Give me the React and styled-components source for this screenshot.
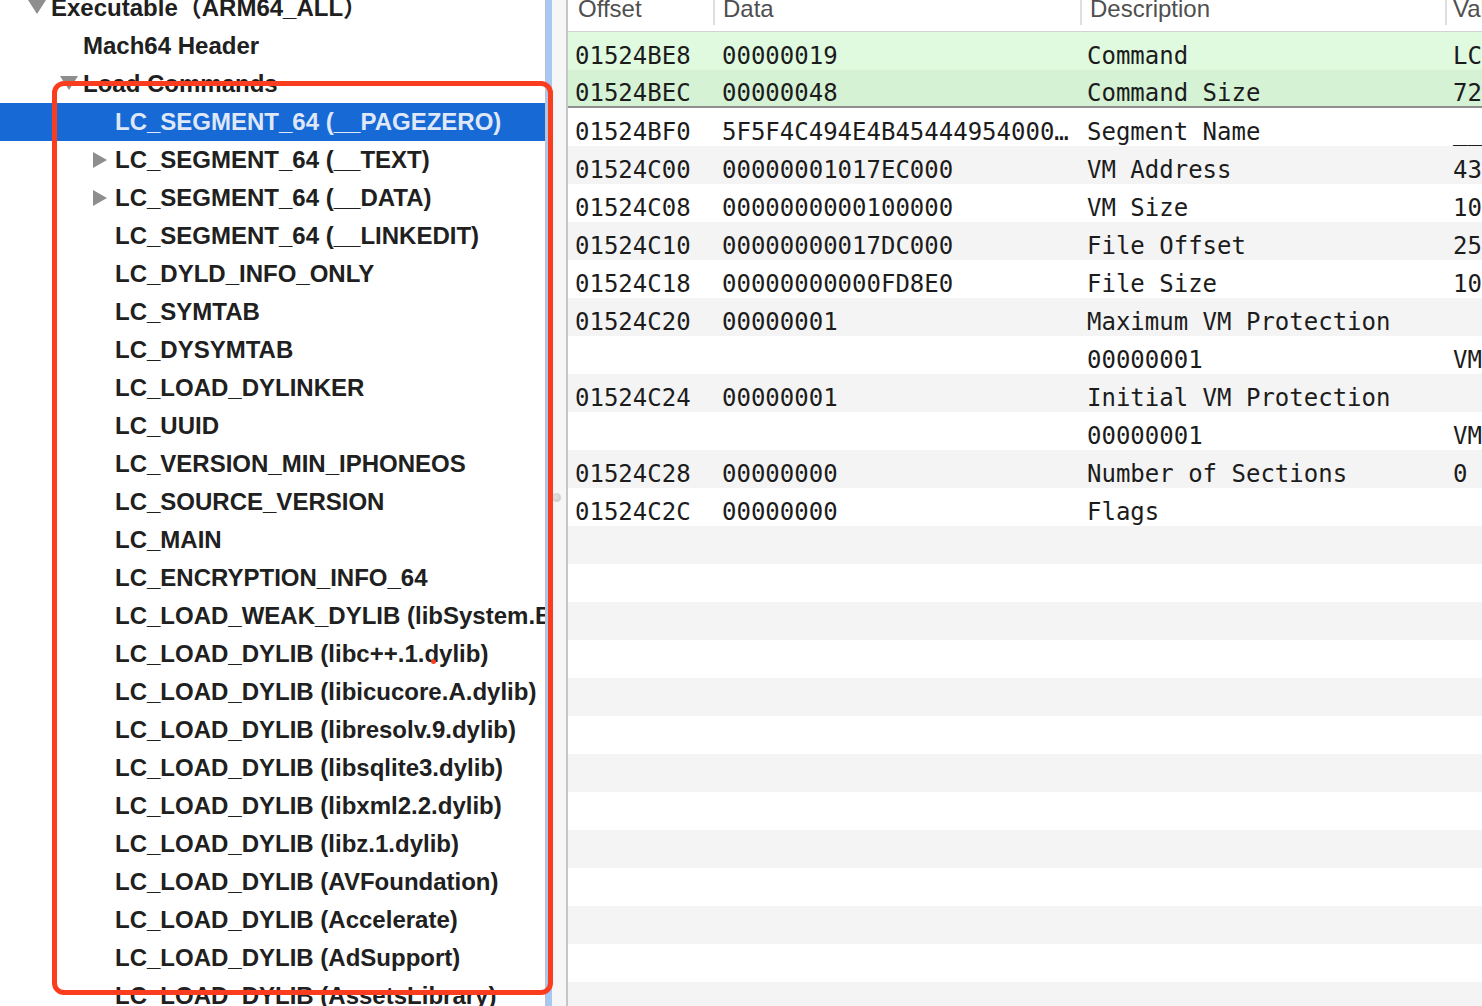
import React from "react";
import styled, { createGlobalStyle } from "styled-components";

const GlobalStyle = createGlobalStyle`
  html, body { margin: 0; padding: 0; background: #ffffff; overflow: hidden; }
  * { box-sizing: border-box; }
`;

const Window = styled.div`
  position: relative;
  display: flex;
  width: 1482px;
  height: 1006px;
  overflow: hidden;
  background: #ffffff;
`;

const Sidebar = styled.div`
  flex: none;
  width: 546px;
  height: 100%;
  overflow: hidden;
  background: #ffffff;
  border-right: 1px solid #c2c2c2;
`;

const ScrollStrip = styled.div`
  flex: none;
  width: 6px;
  height: 100%;
  background: #a8c8f4;
`;

const Splitter = styled.div`
  flex: none;
  width: 16px;
  height: 100%;
  background: #f6f6f6;
  border-right: 2px solid #c6c6c6;
  display: flex;
  align-items: center;
  justify-content: flex-start;
`;

const Dimple = styled.div`
  width: 9px;
  height: 9px;
  margin-top: -12px;
  border-radius: 50%;
  background: radial-gradient(circle at 40% 40%, #e2e2e2, #c4c4c4);
`;

const TreeList = styled.div`
  margin-top: -11px;
  display: flex;
  flex-direction: column;
`;

const TreeRow = styled.div`
  display: flex;
  align-items: center;
  height: 38px;
  padding-left: ${(p) => 27 + 32 * p.$level}px;
  background: ${(p) => (p.$selected ? "#1769d6" : "transparent")};
  color: ${(p) => (p.$selected ? "#dfe8f8" : "#202020")};
  font-family: "Liberation Sans", Arial, "Noto Sans CJK SC", sans-serif;
  font-weight: 700;
  font-size: 24px;
  white-space: nowrap;
`;

const Toggle = styled.span`
  flex: none;
  width: 24px;
  height: 38px;
  display: flex;
  align-items: center;
  justify-content: flex-start;
  color: #8e8e8e;
`;

const Label = styled.span`
  line-height: 38px;
`;

const Pane = styled.div`
  flex: 1;
  min-width: 0;
  height: 100%;
  display: flex;
  flex-direction: column;
  overflow: hidden;
`;

const COLS = "145px 367px 365px 1fr";

const HeaderRow = styled.div`
  flex: none;
  display: grid;
  grid-template-columns: ${COLS};
  height: 32px;
  border-bottom: 1px solid #d2d2d2;
  background: #ffffff;
`;

const HeaderCell = styled.div`
  position: relative;
  padding-left: ${(p) => p.$pad}px;
  font-family: "Liberation Sans", Arial, sans-serif;
  font-size: 24px;
  line-height: 18px;
  color: #4f4f4f;
  white-space: nowrap;
  overflow: hidden;
  &:not(:first-child)::before {
    content: "";
    position: absolute;
    left: 0;
    top: 0;
    width: 2px;
    height: 25px;
    background: #dedede;
  }
`;

const rowBg = {
  green1: "#dffadf",
  green2: "#d5f2d5",
  white: "#ffffff",
  gray: "#f4f4f4",
};

const DataRow = styled.div`
  flex: none;
  display: grid;
  grid-template-columns: ${COLS};
  height: 38px;
  padding-top: 9px;
  align-items: center;
  background: ${(p) => rowBg[p.$tone]};
  border-bottom: ${(p) => (p.$divider ? "2px solid #8f8f8f" : "none")};
  font-family: "DejaVu Sans Mono", "Liberation Mono", monospace;
  font-size: 24px;
  line-height: 28px;
  color: #1c1c1c;
`;

const Cell = styled.div`
  padding-left: ${(p) => p.$pad}px;
  white-space: pre;
  overflow: hidden;
`;

const Annotation = styled.div`
  position: absolute;
  left: 52px;
  top: 81px;
  width: 501px;
  height: 914px;
  border: 5px solid #fb3d1f;
  border-radius: 12px;
  pointer-events: none;
`;

const Dot = styled.div`
  position: absolute;
  left: 431px;
  top: 659px;
  width: 5px;
  height: 5px;
  border-radius: 50%;
  background: #fb3d1f;
`;

const DownTri = () => (
  <svg width="18" height="14" viewBox="0 0 18 14" style={{ marginLeft: 1, marginTop: -2 }}>
    <path d="M0 0 H18 L9 14 Z" fill="currentColor" />
  </svg>
);

const RightTri = () => (
  <svg width="14" height="16" viewBox="0 0 14 16" style={{ marginLeft: 2 }}>
    <path d="M0 0 L14 8 L0 16 Z" fill="currentColor" />
  </svg>
);

const tree = [
  { level: 0, label: "Executable（ARM64_ALL）", toggle: "down" },
  { level: 1, label: "Mach64 Header" },
  { level: 1, label: "Load Commands", toggle: "down" },
  { level: 2, label: "LC_SEGMENT_64 (__PAGEZERO)", selected: true },
  { level: 2, label: "LC_SEGMENT_64 (__TEXT)", toggle: "right" },
  { level: 2, label: "LC_SEGMENT_64 (__DATA)", toggle: "right" },
  { level: 2, label: "LC_SEGMENT_64 (__LINKEDIT)" },
  { level: 2, label: "LC_DYLD_INFO_ONLY" },
  { level: 2, label: "LC_SYMTAB" },
  { level: 2, label: "LC_DYSYMTAB" },
  { level: 2, label: "LC_LOAD_DYLINKER" },
  { level: 2, label: "LC_UUID" },
  { level: 2, label: "LC_VERSION_MIN_IPHONEOS" },
  { level: 2, label: "LC_SOURCE_VERSION" },
  { level: 2, label: "LC_MAIN" },
  { level: 2, label: "LC_ENCRYPTION_INFO_64" },
  { level: 2, label: "LC_LOAD_WEAK_DYLIB (libSystem.B.dylib)" },
  { level: 2, label: "LC_LOAD_DYLIB (libc++.1.dylib)" },
  { level: 2, label: "LC_LOAD_DYLIB (libicucore.A.dylib)" },
  { level: 2, label: "LC_LOAD_DYLIB (libresolv.9.dylib)" },
  { level: 2, label: "LC_LOAD_DYLIB (libsqlite3.dylib)" },
  { level: 2, label: "LC_LOAD_DYLIB (libxml2.2.dylib)" },
  { level: 2, label: "LC_LOAD_DYLIB (libz.1.dylib)" },
  { level: 2, label: "LC_LOAD_DYLIB (AVFoundation)" },
  { level: 2, label: "LC_LOAD_DYLIB (Accelerate)" },
  { level: 2, label: "LC_LOAD_DYLIB (AdSupport)" },
  { level: 2, label: "LC_LOAD_DYLIB (AssetsLibrary)" },
  { level: 2, label: "LC_LOAD_DYLIB (AudioToolbox)" },
];

const rows = [
  ["01524BE8", "00000019", "Command", "LC_SEGMENT_64"],
  ["01524BEC", "00000048", "Command Size", "72"],
  ["01524BF0", "5F5F4C494E4B45444954000…", "Segment Name", "__LINKEDIT"],
  ["01524C00", "00000001017EC000", "VM Address", "4320051200"],
  ["01524C08", "0000000000100000", "VM Size", "1048576"],
  ["01524C10", "00000000017DC000", "File Offset", "25018368"],
  ["01524C18", "00000000000FD8E0", "File Size", "1038560"],
  ["01524C20", "00000001", "Maximum VM Protection", ""],
  ["", "", "00000001", "VM_PROT_READ"],
  ["01524C24", "00000001", "Initial VM Protection", ""],
  ["", "", "00000001", "VM_PROT_READ"],
  ["01524C28", "00000000", "Number of Sections", "0"],
  ["01524C2C", "00000000", "Flags", ""],
];

const TOTAL_ROWS = 26;

export default function App() {
  const allRows = Array.from({ length: TOTAL_ROWS }, (_, i) => rows[i] || ["", "", "", ""]);
  const toneFor = (i) => (i === 0 ? "green1" : i === 1 ? "green2" : i % 2 === 0 ? "white" : "gray");
  const pads = [7, 9, 7, 8];
  return (
    <>
      <GlobalStyle />
      <Window>
        <Sidebar>
          <TreeList>
            {tree.map((t, i) => (
              <TreeRow key={i} $level={t.level} $selected={t.selected}>
                <Toggle>
                  {t.toggle === "down" && <DownTri />}
                  {t.toggle === "right" && <RightTri />}
                </Toggle>
                <Label>{t.label}</Label>
              </TreeRow>
            ))}
          </TreeList>
        </Sidebar>
        <ScrollStrip />
        <Splitter>
          <Dimple />
        </Splitter>
        <Pane>
          <HeaderRow>
            <HeaderCell $pad={10}>Offset</HeaderCell>
            <HeaderCell $pad={10}>Data</HeaderCell>
            <HeaderCell $pad={10}>Description</HeaderCell>
            <HeaderCell $pad={8}>Value</HeaderCell>
          </HeaderRow>
          {allRows.map((r, i) => (
            <DataRow key={i} $tone={toneFor(i)} $divider={i === 1}>
              {r.map((c, j) => (
                <Cell key={j} $pad={pads[j]}>{c}</Cell>
              ))}
            </DataRow>
          ))}
        </Pane>
        <Annotation />
        <Dot />
      </Window>
    </>
  );
}
